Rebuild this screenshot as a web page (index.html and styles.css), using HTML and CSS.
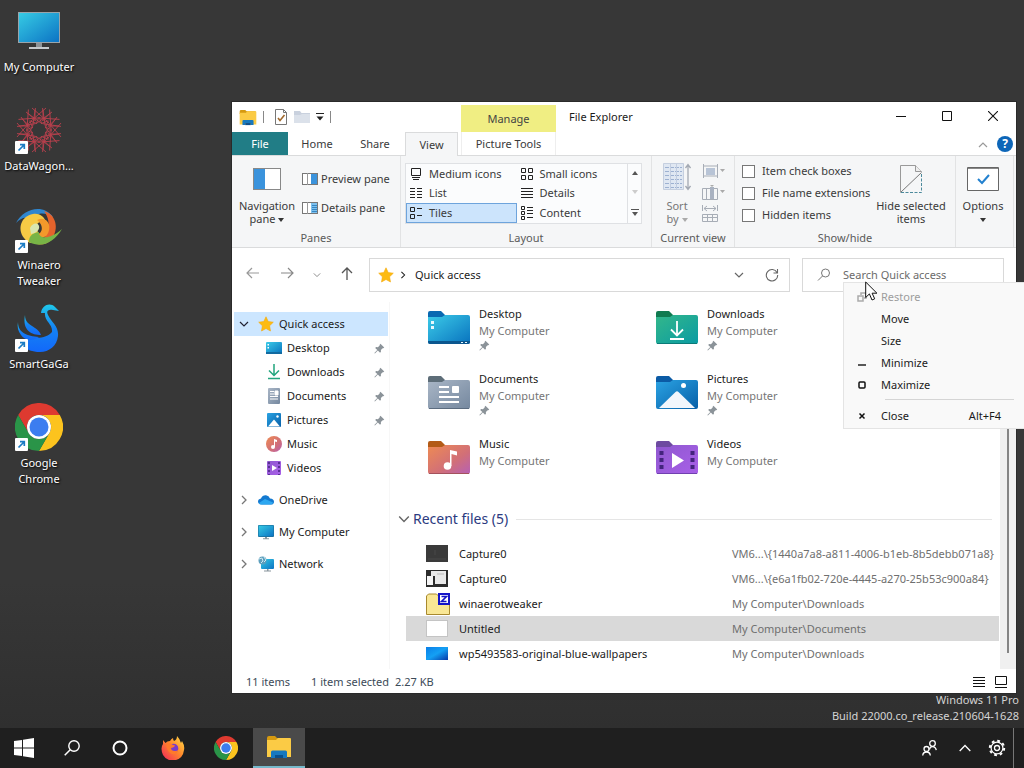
FILE: index.html
```html
<!DOCTYPE html>
<html lang="en">
<head>
    <meta charset="UTF-8">
    <meta name="viewport" content="width=device-width, initial-scale=1.0">
    <title>File Explorer</title>
    <link rel="stylesheet" href="styles.css">
</head>
<body>
    <!-- shared icons -->
    <svg class="defs" aria-hidden="true">
        <defs>
            <linearGradient id="g-screen" x1="0" y1="0" x2="1" y2="1"><stop offset="0" stop-color="#36cbe4"/><stop offset="1" stop-color="#0c73c4"/></linearGradient>
            <linearGradient id="g-desktop" x1="0" y1="0" x2="1" y2="1"><stop offset="0" stop-color="#3ccbe8"/><stop offset="1" stop-color="#0872be"/></linearGradient>
            <linearGradient id="g-downloads" x1="0" y1="0" x2="1" y2="1"><stop offset="0" stop-color="#33b78a"/><stop offset="1" stop-color="#0a9ba3"/></linearGradient>
            <linearGradient id="g-documents" x1="0" y1="0" x2="1" y2="1"><stop offset="0" stop-color="#a9b6c6"/><stop offset="1" stop-color="#75889f"/></linearGradient>
            <linearGradient id="g-pictures" x1="0" y1="0" x2="1" y2="1"><stop offset="0" stop-color="#2ba3e3"/><stop offset="1" stop-color="#065fa8"/></linearGradient>
            <linearGradient id="g-music" x1="0" y1="0" x2="1" y2="1"><stop offset="0" stop-color="#ee8b53"/><stop offset=".6" stop-color="#d16f78"/><stop offset="1" stop-color="#b660b5"/></linearGradient>
            <linearGradient id="g-videos" x1="0" y1="0" x2="1" y2="1"><stop offset="0" stop-color="#8f58cf"/><stop offset="1" stop-color="#a860e8"/></linearGradient>
            <linearGradient id="g-swan" x1="0" y1="0" x2="0" y2="1"><stop offset="0" stop-color="#1fc8ea"/><stop offset=".5" stop-color="#1583f3"/><stop offset="1" stop-color="#1268fa"/></linearGradient>
            <linearGradient id="g-fox" x1="1" y1="0" x2="0" y2="1"><stop offset="0" stop-color="#ffe14a"/><stop offset=".45" stop-color="#ff8a2b"/><stop offset="1" stop-color="#f3215c"/></linearGradient>
            <linearGradient id="g-wall" x1="0" y1="0" x2="1" y2="1"><stop offset="0" stop-color="#0a7fe8"/><stop offset=".5" stop-color="#14a0f4"/><stop offset="1" stop-color="#0838a8"/></linearGradient>
        </defs>
        <symbol id="i-shortcut" viewBox="0 0 13 13"><rect width="13" height="13" rx="1" fill="#fff"/><path d="M3.500 9.500L8.500 4.500M5 3.700h4.300V8" fill="none" stroke="#1c7cc4" stroke-width="1.700"/></symbol>
        <symbol id="i-chrome" viewBox="0 0 48 48">
            <path fill="#de3a30" d="M24 12h20.800A24 24 0 0 0 3.200 12l10.400 18A12 12 0 0 1 24 12z"/>
            <path fill="#fcc31e" d="M44.800 12A24 24 0 0 1 24 48l10.400-18A12 12 0 0 0 24 12z"/>
            <path fill="#2a9448" d="M3.200 12A24 24 0 0 0 24 48l10.400-18a12 12 0 0 1-20.800 0z"/>
            <circle cx="24" cy="24" r="12" fill="#fff"/><circle cx="24" cy="24" r="9.500" fill="#3c7df0"/>
        </symbol>
        <symbol id="i-monitor" viewBox="0 0 16 16"><rect x="0" y="1" width="16" height="12" rx="1" fill="#1b6f9c"/><rect x=".6" y="1.600" width="14.800" height="10.600" fill="url(#g-screen)"/><path d="M7 13h2v1.500H7zM5 14.300h6v1H5z" fill="#8a969e"/></symbol>
        <symbol id="i-pin" viewBox="0 0 12 12"><path fill="#8b9399" d="M7 .8L11.200 5l-1.100.7-.6-.1-2 2 .1 2-1 1L4.200 8.200 1 11.400l-.6-.6L3.600 7.600 1.300 5.400l1-1 2 .1 2-2-.1-.7z"/></symbol>
        <symbol id="i-star" viewBox="0 0 16 16"><path fill="#fdbb12" stroke="#f5a90b" stroke-width=".6" stroke-linejoin="round" d="M8 .8l2.200 4.700 5.100.7-3.700 3.600.9 5.200L8 12.500 3.500 15l.9-5.200L.7 6.200l5.100-.7z"/></symbol>
        <symbol id="i-explorer" viewBox="0 0 26 24"><path d="M1 3q0-2 2-2h6l2 2h13v4H1z" fill="#d69a10"/><path d="M1 5h9l2-2h12q1 0 1 1v18H1z" fill="#fbcb45"/><path d="M5 23v-6q0-1.500 1.500-1.500h13Q21 15.500 21 17v6h-4v-3H9v3z" fill="#1778bf"/><path d="M9 23v-3h8v3z" fill="#0b4f8c"/></symbol>
        <symbol id="i-chev" viewBox="0 0 10 10"><path d="M3 1l4 4-4 4" fill="none" stroke="currentColor" stroke-width="1.300"/></symbol>
        <symbol id="i-chevdown" viewBox="0 0 10 10"><path d="M1 3l4 4 4-4" fill="none" stroke="currentColor" stroke-width="1.200"/></symbol>
    </svg>

    <main class="desktop">
        <div class="desktop-icons">
            <a class="desktop-icon" href="#computer">
                <span class="desktop-pic">
                    <svg width="48" height="48" viewBox="0 0 48 48"><rect x="3" y="5" width="42" height="31" fill="#9aa4aa"/><rect x="4" y="6" width="40" height="29" fill="url(#g-screen)"/><path d="M21 36h6v4h-6z" fill="#8d9397"/><path d="M14 40h20v2H14z" fill="#c6cacd"/></svg>
                </span>
                My Computer
            </a>
            <a class="desktop-icon" href="#datawagon">
                <span class="desktop-pic">
                    <svg width="48" height="48" viewBox="-24 -24 48 48" fill="none" stroke="#b8404d" stroke-width=".9">
                        <g id="spoke"><path d="M-7-22L8-9M7-22L-8-9M-13-18L2-7M13-18L-2-7M-4-20V-9M4-20V-9M-3-6L0-13 3-6"/></g>
                        <use href="#spoke" transform="rotate(45)"/>
                        <use href="#spoke" transform="rotate(90)"/>
                        <use href="#spoke" transform="rotate(135)"/>
                        <use href="#spoke" transform="rotate(180)"/>
                        <use href="#spoke" transform="rotate(225)"/>
                        <use href="#spoke" transform="rotate(270)"/>
                        <use href="#spoke" transform="rotate(315)"/>
                    </svg>
                    <svg class="shortcut"><use href="#i-shortcut"/></svg>
                </span>
                DataWagon...
            </a>
            <a class="desktop-icon" href="#winaero">
                <span class="desktop-pic">
                    <svg width="48" height="48" viewBox="0 0 48 48">
                        <path fill="#2f86cf" d="M1 18C8 4 28-2 38 12c-8-5-17-5-22 3C11 11 6 13 1 18z"/>
                        <path fill="#e4632c" d="M29 6c14 4 15 21 6 30-5 4-9 4-13 3 11-5 16-21 7-33z"/>
                        <path fill="#f6ca45" d="M18 9C6 11 2 24 9 33c2 3 5 5 8 5 0-5 1-8 7-9-5-8-2-14 7-12-2-6-7-9-13-8z"/>
                        <path fill="#f3992b" d="M22 15c10-5 16 6 10 15-4 4-9 3-11-1 6 1 9-8 1-14z"/>
                        <path fill="#78b446" d="M14 37c0-6 3-9 10-10-1 7 11 8 23-3C39 37 27 44 14 37z"/>
                        <path fill="#d9e7b0" d="M15 23c2-5 8-6 9-2s-3 7-8 8z"/>
                    </svg>
                    <svg class="shortcut"><use href="#i-shortcut"/></svg>
                </span>
                Winaero<br>Tweaker
            </a>
            <a class="desktop-icon" href="#smartgaga">
                <span class="desktop-pic">
                    <svg width="48" height="48" viewBox="0 0 48 48" fill="url(#g-swan)">
                        <path d="M26 9c1-8 9-11 14-6l4 4-6-1c-5-1-7 1-5 5 3 7 11 11 10 21-1 10-9 16-18 16-8 0-13-2-17-7l7-8c9 2 18 0 22-5 1-8-8-11-7-19z"/>
                        <path d="M10 11c0 7 4 9 10 13 3 2 5 4 6 7-9 0-19-4-16-20z"/>
                        <path d="M3 18c0 11 9 14 21 15-7 5-15 3-18-2-3-4-4-8-3-13z"/>
                    </svg>
                    <svg class="shortcut"><use href="#i-shortcut"/></svg>
                </span>
                SmartGaGa
            </a>
            <a class="desktop-icon" href="#chrome">
                <span class="desktop-pic">
                    <svg width="48" height="48"><use href="#i-chrome"/></svg>
                    <svg class="shortcut"><use href="#i-shortcut"/></svg>
                </span>
                Google<br>Chrome
            </a>
        </div>

        <p class="watermark">Windows 11 Pro<br>Build 22000.co_release.210604-1628</p>

        <section class="window">
            <header class="titlebar">
                <div class="quick-bar">
                    <svg width="18" height="17"><use href="#i-explorer"/></svg>
                    <span class="bar"></span>
                    <button class="quick-btn check" aria-label="Properties"><svg width="14" height="16" viewBox="0 0 14 16" fill="none"><path d="M1.500.5h8l3 3v12h-11z" stroke="#777" fill="#fff"/><path d="M9.500.5v3h3" stroke="#777"/><path d="M4 9l2 2.500L10.500 6" stroke="#a0682c" stroke-width="1.600"/></svg></button>
                    <button class="quick-btn" aria-label="New folder"><svg width="16" height="14" viewBox="0 0 16 14"><path d="M0 1h6l1.500 2H16v10H0z" fill="#c9d1de"/><path d="M0 5h6l2-1h8v9H0z" fill="#dbe1ea"/></svg></button>
                    <button class="quick-btn" aria-label="Customize"><svg width="8" height="8" viewBox="0 0 8 8"><path d="M0 .5h8" stroke="#222"/><path d="M.5 3.500h7L4 7.500z" fill="#222"/></svg></button>
                    <span class="bar"></span>
                </div>
                <span class="manage">Manage</span>
                <h1 class="title">File Explorer</h1>
                <button class="win-btn" aria-label="Minimize window"><svg width="10" height="10"><path d="M0 5.500h10" stroke="#111"/></svg></button>
                <button class="win-btn" aria-label="Maximize window"><svg width="10" height="10"><path d="M.5.5h9v9h-9z" fill="none" stroke="#111"/></svg></button>
                <button class="win-btn" aria-label="Close window"><svg width="10" height="10"><path d="M0 0l10 10M10 0L0 10" stroke="#111" stroke-width="1.100"/></svg></button>
            </header>

            <nav class="tabs">
                <button class="tab file">File</button>
                <button class="tab">Home</button>
                <button class="tab">Share</button>
                <button class="tab active">View</button>
                <button class="tab tools">Picture Tools</button>
                <button class="tab-icon" aria-label="Collapse ribbon"><svg width="10" height="6" viewBox="0 0 10 6"><path d="M1 5l4-4 4 4" fill="none" stroke="#999" stroke-width="1.200"/></svg></button>
                <button class="help" aria-label="Help">?</button>
            </nav>

            <div class="ribbon">
                <section class="group panes">
                    <div class="group-body">
                        <button class="big-btn">
                            <svg width="28" height="22" viewBox="0 0 28 22"><rect x=".5" y=".5" width="27" height="21" fill="#fff" stroke="#888"/><path d="M1 1h11v20H1z" fill="#3b93dc"/></svg>
                            <span>Navigation<br>pane <i class="caret"></i></span>
                        </button>
                        <div class="pane-list">
                            <button class="small-btn"><svg width="16" height="12" viewBox="0 0 16 12"><rect x=".5" y=".5" width="15" height="11" fill="#fff" stroke="#777"/><path d="M5.500 0v12" stroke="#999"/><path d="M9 1h6v10H9z" fill="#3b93dc"/></svg>Preview pane</button>
                            <button class="small-btn"><svg width="16" height="12" viewBox="0 0 16 12"><rect x=".5" y=".5" width="15" height="11" fill="#fff" stroke="#777"/><path d="M5.500 0v12" stroke="#999"/><path d="M9 1h6v10H9z" fill="#7ec1ee"/><path d="M10 3.500h5M10 5.500h5M10 7.500h5M10 9.500h5" stroke="#2277b8" stroke-width=".8"/></svg>Details pane</button>
                        </div>
                    </div>
                    <h2>Panes</h2>
                </section>

                <section class="group layout">
                    <div class="gallery">
                        <div class="gallery-grid">
                            <button><svg width="14" height="14" viewBox="0 0 14 14" fill="none" stroke="#222"><path d="M2.500 1.500h9v7h-9zM3 10.500h8M4 12.500h6"/></svg>Medium icons</button>
                            <button><svg width="14" height="14" viewBox="0 0 14 14" fill="none" stroke="#222"><path d="M1.500 1.500h4v4h-4zM8.500 1.500h4v4h-4zM1.500 8.500h4v4h-4zM8.500 8.500h4v4h-4z"/></svg>Small icons</button>
                            <button><svg width="14" height="14" viewBox="0 0 14 14" stroke="#222"><path d="M1 2.500h5M8 2.500h5M1 5.500h5M8 5.500h5M1 8.500h5M8 8.500h5M1 11.500h5M8 11.500h5"/></svg>List</button>
                            <button><svg width="14" height="14" viewBox="0 0 14 14" stroke="#222"><path d="M1 2.500h12M1 5.500h12M1 8.500h12M1 11.500h12"/></svg>Details</button>
                            <button class="on"><svg width="14" height="14" viewBox="0 0 14 14" fill="none" stroke="#222"><path d="M1.500 1.500h4v4h-4zM1.500 8.500h4v4h-4zM8 2.500h5M8 9.500h5"/></svg>Tiles</button>
                            <button><svg width="14" height="14" viewBox="0 0 14 14" fill="none" stroke="#222"><path d="M1.500.5h3v3h-3zM1.500 5.500h3v3h-3zM1.500 10.500h3v3h-3zM7 1.500h6M7 4.500h6M7 7.500h6M7 11.500h6"/></svg>Content</button>
                        </div>
                        <div class="gallery-scroll">
                            <button aria-label="Row up"><svg width="6" height="4"><path d="M0 4l3-4 3 4z" fill="#555"/></svg></button>
                            <button aria-label="Row down"><svg width="6" height="4"><path d="M0 0l3 4 3-4z" fill="#ccc"/></svg></button>
                            <button aria-label="More layouts"><svg width="8" height="7"><path d="M0 .5h8" stroke="#555"/><path d="M1 3l3 4 3-4z" fill="#555"/></svg></button>
                        </div>
                    </div>
                    <h2>Layout</h2>
                </section>

                <section class="group current">
                    <div class="group-body">
                        <button class="big-btn" disabled>
                            <svg width="28" height="28" viewBox="0 0 28 28" fill="none"><path d="M.5.5h20v26H.5z" fill="#dfe7f2" stroke="#c5cfdf"/><path d="M2 4.500h17M2 8.500h17M2 12.500h17M2 16.500h17M2 20.500h17M2 24.500h17" stroke="#9db1d1" stroke-dasharray="4 1"/><path d="M7.500 1v25M13.500 1v25" stroke="#c2cde0"/><path d="M25 2v24M22.500 5L25 1.500 27.500 5M22.500 23l2.500 3.500 2.500-3.500" stroke="#a3a9b3" stroke-width="1.300"/></svg>
                            <span>Sort<br>by <i class="caret"></i></span>
                        </button>
                        <div class="view-tools">
                            <button disabled aria-label="Group by"><svg width="24" height="16" viewBox="0 0 24 16" fill="none"><path d="M1.500 1v14M15.500 1v14M1 3h15M1 13h15" stroke="#a7adb6"/><path d="M4 5h9v7H4z" fill="#b8c4d6"/><path d="M18 6h5l-2.500 3z" fill="#aaa"/></svg></button>
                            <button disabled aria-label="Add columns"><svg width="24" height="16" viewBox="0 0 24 16" fill="none"><path d="M.5 4.500h15v11H.5zM4.500 4v12" stroke="#a7adb6"/><path d="M8 3h4v12H8z" fill="#a9b2c1"/><path d="M8 1h4l-2 2zM18 6h5l-2.500 3z" fill="#aaa"/></svg></button>
                            <button disabled aria-label="Size all columns to fit"><svg width="24" height="18" viewBox="0 0 24 18" fill="none" stroke="#a7adb6"><path d="M.5 0v6M15.500 0v6M2 3.500h12M5 1L2 3.500 5 6M11 1l3 2.500L11 6M.5 9.500h15v7H.5zM5.500 9v8M10.500 9v8M0 12.500h16"/></svg></button>
                        </div>
                    </div>
                    <h2>Current view</h2>
                </section>

                <section class="group showhide">
                    <div class="group-body">
                        <div class="checks">
                            <label><input type="checkbox">Item check boxes</label>
                            <label><input type="checkbox">File name extensions</label>
                            <label><input type="checkbox">Hidden items</label>
                        </div>
                        <button class="big-btn hide-btn">
                            <svg width="22" height="28" viewBox="0 0 22 28" fill="none"><path d="M.5 27V.5h15l6 6" stroke="#999"/><path d="M15.500.5v6h6" stroke="#999" fill="#eee"/><path d="M.5 27.500l21-20" stroke="#777"/><path d="M21.500 9v18.500H1" stroke="#4c8a9c" stroke-dasharray="3 1.500"/></svg>
                            <span>Hide selected<br>items</span>
                        </button>
                    </div>
                    <h2>Show/hide</h2>
                </section>

                <section class="group options">
                    <div class="group-body">
                        <button class="big-btn">
                            <svg width="32" height="24" viewBox="0 0 32 24" fill="none"><path d="M.5.500h31v23H.500z" fill="#fff" stroke="#666"/><path d="M1 1.500h30" stroke="#888"/><path d="M11 12l4 4 7-8" stroke="#2381cf" stroke-width="2"/></svg>
                            <span>Options<br><i class="caret"></i></span>
                        </button>
                    </div>
                </section>
            </div>

            <div class="address-row">
                <button class="nav-btn" aria-label="Back"><svg width="14" height="12" viewBox="0 0 14 12"><path d="M13 6H1M6 1L1 6l5 5" fill="none" stroke="#999" stroke-width="1.200"/></svg></button>
                <button class="nav-btn" aria-label="Forward"><svg width="14" height="12" viewBox="0 0 14 12"><path d="M1 6h12M8 1l5 5-5 5" fill="none" stroke="#888" stroke-width="1.200"/></svg></button>
                <button class="nav-btn recent-btn" aria-label="Recent locations"><svg width="8" height="8"><use href="#i-chevdown"/></svg></button>
                <button class="nav-btn" aria-label="Up"><svg width="12" height="13" viewBox="0 0 12 13"><path d="M6 13V1M1 6l5-5 5 5" fill="none" stroke="#555" stroke-width="1.300"/></svg></button>
                <div class="address">
                    <svg width="16" height="16"><use href="#i-star"/></svg>
                    <svg class="crumb" width="8" height="8"><use href="#i-chev"/></svg>
                    <span>Quick access</span>
                    <button class="drop" aria-label="Previous locations"><svg width="10" height="10"><use href="#i-chevdown"/></svg></button>
                    <button aria-label="Refresh"><svg width="14" height="14" viewBox="0 0 14 14"><path d="M12 4.500A5.700 5.700 0 1 0 12.700 7M12.500 1v4h-4" fill="none" stroke="#666" stroke-width="1.100"/></svg></button>
                </div>
                <label class="search">
                    <svg width="14" height="14" viewBox="0 0 14 14"><circle cx="8.500" cy="5" r="4" fill="none" stroke="#777"/><path d="M5.500 8L1 12.500" stroke="#777"/></svg>
                    <input type="text" aria-label="Search" placeholder="Search Quick access">
                </label>
            </div>

            <div class="body">
                <nav class="sidebar">
                    <a class="node root selected" href="#quick"><svg class="arrow" width="10" height="10"><use href="#i-chevdown"/></svg><svg width="16" height="16"><use href="#i-star"/></svg>Quick access</a>
                    <a class="node" href="#desktop"><svg width="16" height="16" viewBox="0 0 16 16"><rect y="2" width="16" height="12" rx="1" fill="url(#g-desktop)"/><path d="M1.500 4h1.500v1.500H1.500zM1.500 7h1.500v1.500H1.500z" fill="#fff"/><path d="M0 12h16v2H0z" fill="#126aa0"/></svg>Desktop<svg class="pin"><use href="#i-pin"/></svg></a>
                    <a class="node" href="#downloads"><svg width="16" height="16" viewBox="0 0 16 16"><path d="M8 0v11M3 6.500l5 5 5-5M2 14.500h12" fill="none" stroke="#22a57e" stroke-width="1.500"/></svg>Downloads<svg class="pin"><use href="#i-pin"/></svg></a>
                    <a class="node" href="#documents"><svg width="16" height="16" viewBox="0 0 16 16"><rect x="2" width="12" height="16" rx="1" fill="url(#g-documents)"/><path d="M4 3.500h4M4 6h4M4 8.500h8M4 11h8M9 3h3v4H9z" stroke="#fff" fill="#fff"/></svg>Documents<svg class="pin"><use href="#i-pin"/></svg></a>
                    <a class="node" href="#pictures"><svg width="16" height="16" viewBox="0 0 16 16"><rect x="1" y="1" width="14" height="14" rx="1" fill="url(#g-pictures)"/><path d="M2 14.500l6-7 6 7z" fill="#fff"/><circle cx="11.500" cy="4.500" r="1.200" fill="#fff"/></svg>Pictures<svg class="pin"><use href="#i-pin"/></svg></a>
                    <a class="node" href="#music"><svg width="16" height="16" viewBox="0 0 16 16"><circle cx="8" cy="8" r="8" fill="url(#g-music)"/><path d="M8 3l3 1v2L9 5.500V11" fill="#fff"/><path d="M8.500 3.500V11" stroke="#fff"/><circle cx="7" cy="11" r="2" fill="#fff"/></svg>Music</a>
                    <a class="node" href="#videos"><svg width="16" height="16" viewBox="0 0 16 16"><rect x="1" y="1" width="14" height="14" rx="1" fill="url(#g-videos)"/><path d="M3 2v13M13 2v13" stroke="#43237d" stroke-width="1.500" stroke-dasharray="2 2"/><path d="M6 5l5 3-5 3z" fill="#fff"/></svg>Videos</a>
                    <div class="roots">
                        <a class="node root" href="#onedrive"><svg class="arrow" width="10" height="10"><use href="#i-chev"/></svg><svg width="16" height="16" viewBox="0 0 16 16"><path d="M4 12.500Q0 12.500 0 9.500 0 7 3 6.500 4.500 3 8 3.300q3 .3 4 3.200 4 .3 4 3.200 0 2.800-3 2.800z" fill="#1379d0"/><path d="M4 12.500Q1 12.500 1 11l6-4 8 3.500q0 2-2.500 2z" fill="#2da7f0"/></svg>OneDrive</a>
                        <a class="node root" href="#pc"><svg class="arrow" width="10" height="10"><use href="#i-chev"/></svg><svg width="16" height="16"><use href="#i-monitor"/></svg>My Computer</a>
                        <a class="node root" href="#network"><svg class="arrow" width="10" height="10"><use href="#i-chev"/></svg><svg width="16" height="16" viewBox="0 0 16 16"><rect x="3" y="3" width="13" height="10" rx="1" fill="url(#g-screen)"/><circle cx="4.500" cy="4.500" r="4" fill="#5d9fbd"/><path d="M1 3l3-1 1 3-2 2M6 1l2 3-2 2" stroke="#cfe9f2" fill="none"/><path d="M9 13h1.500v1.500H13v1H6v-1h3z" fill="#8a969e"/></svg>Network</a>
                    </div>
                </nav>

                <div class="content">
                    <div class="tiles">
                        <a class="tile" href="#desktop">
                            <svg width="42" height="34" viewBox="0 0 42 34"><path d="M0 2q0-2 2-2h11l4 4v4H0z" fill="#0968b1"/><path d="M0 6h14l3-2h23q2 0 2 2v25q0 2-2 2H2q-2 0-2-2z" fill="url(#g-desktop)"/><path d="M0 30h42v1q0 2-2 2H2q-2 0-2-2z" fill="#0b568e"/><path d="M3 10h3v3H3zM3 15h3v3H3zM33 31h2v1h-2zM37 31h2v1h-2z" fill="#e8f8fd"/></svg>
                            <span>Desktop<small>My Computer</small><svg class="pin"><use href="#i-pin"/></svg></span>
                        </a>
                        <a class="tile" href="#downloads">
                            <svg width="42" height="34" viewBox="0 0 42 34"><path d="M0 2q0-2 2-2h11l4 4v4H0z" fill="#107a50"/><path d="M0 6h14l3-2h23q2 0 2 2v25q0 2-2 2H2q-2 0-2-2z" fill="url(#g-downloads)"/><path d="M1 32.500h40" stroke="#0b7b78"/><path d="M21 10v14M15 18.500l6 6 6-6M14 28h14" fill="none" stroke="#fff" stroke-width="1.800"/></svg>
                            <span>Downloads<small>My Computer</small><svg class="pin"><use href="#i-pin"/></svg></span>
                        </a>
                        <a class="tile" href="#documents">
                            <svg width="42" height="34" viewBox="0 0 42 34"><path d="M0 2q0-2 2-2h11l4 4v4H0z" fill="#5d6d78"/><path d="M0 6h14l3-2h23q2 0 2 2v25q0 2-2 2H2q-2 0-2-2z" fill="url(#g-documents)"/><path d="M1 32.500h40" stroke="#5b6c80"/><path d="M11 11h10M11 16h10M11 21h20M11 26h20" stroke="#fff" stroke-width="2"/><rect x="24" y="10" width="7" height="7" rx="1" fill="#fff"/></svg>
                            <span>Documents<small>My Computer</small><svg class="pin"><use href="#i-pin"/></svg></span>
                        </a>
                        <a class="tile" href="#pictures">
                            <svg width="42" height="34" viewBox="0 0 42 34"><path d="M0 2q0-2 2-2h11l4 4v4H0z" fill="#0b5ba5"/><path d="M0 6h14l3-2h23q2 0 2 2v25q0 2-2 2H2q-2 0-2-2z" fill="url(#g-pictures)"/><path d="M3 32l16.500-16q1.500-1.500 3 0L39 32z" fill="#f1f6fc"/><circle cx="27.500" cy="9.500" r="2.500" fill="#fff"/></svg>
                            <span>Pictures<small>My Computer</small><svg class="pin"><use href="#i-pin"/></svg></span>
                        </a>
                        <a class="tile" href="#music">
                            <svg width="42" height="34" viewBox="0 0 42 34"><path d="M0 2q0-2 2-2h11l4 4v4H0z" fill="#b35b17"/><path d="M0 6h14l3-2h23q2 0 2 2v25q0 2-2 2H2q-2 0-2-2z" fill="url(#g-music)"/><path d="M1 32.500h40" stroke="#a4525c"/><circle cx="19.500" cy="25" r="3.800" fill="#fff"/><path d="M22 9l7 1.500v4L23.500 13v12H22z" fill="#fff"/></svg>
                            <span>Music<small>My Computer</small></span>
                        </a>
                        <a class="tile" href="#videos">
                            <svg width="42" height="34" viewBox="0 0 42 34"><path d="M0 2q0-2 2-2h11l4 4v4H0z" fill="#6d4aa0"/><path d="M0 6h14l3-2h23q2 0 2 2v25q0 2-2 2H2q-2 0-2-2z" fill="url(#g-videos)"/><path d="M1 32.500h40" stroke="#7040b0"/><path d="M5.500 10v20M36.500 10v20" stroke="#43237d" stroke-width="4" stroke-dasharray="4 3"/><path d="M16 12l12 7.500L16 27z" fill="#fff"/></svg>
                            <span>Videos<small>My Computer</small></span>
                        </a>
                    </div>

                    <h2 class="recent-title"><svg width="12" height="12"><use href="#i-chevdown"/></svg>Recent files (5)</h2>

                    <table class="files">
                        <tr>
                            <td class="thumb"><svg width="22" height="17"><rect width="22" height="17" fill="#3a3a3a"/><path d="M2 14h18M9 5v5" stroke="#484848"/></svg></td>
                            <td class="name">Capture0</td>
                            <td class="path">VM6...\{1440a7a8-a811-4006-b1eb-8b5debb071a8}</td>
                        </tr>
                        <tr>
                            <td class="thumb"><svg width="22" height="17"><rect width="22" height="17" fill="#2c2c2c"/><path d="M5 1h15v13H9V6H5z" fill="#e9e9e9"/><path d="M1 6h6v9H1z" fill="#f5f5f5"/><path d="M11 4h7" stroke="#bbb"/></svg></td>
                            <td class="name">Capture0</td>
                            <td class="path">VM6...\{e6a1fb02-720e-4445-a270-25b53c900a84}</td>
                        </tr>
                        <tr>
                            <td class="thumb"><svg width="24" height="22" viewBox="0 0 24 22"><path d="M.500 21.500V3l2-2h8l2 2h11v18.500z" fill="#f9e795" stroke="#a8892e"/><rect x="13" y="1" width="10" height="10" fill="#fff" stroke="#1515c8" stroke-width="2"/><path d="M15.500 3.500h5l-5 5h5" fill="none" stroke="#1515c8" stroke-width="1.600"/></svg></td>
                            <td class="name">winaerotweaker</td>
                            <td class="path">My Computer\Downloads</td>
                        </tr>
                        <tr class="selected">
                            <td class="thumb"><svg width="22" height="17"><rect x=".5" y=".5" width="21" height="16" fill="#fff" stroke="#c4c4c4"/></svg></td>
                            <td class="name">Untitled</td>
                            <td class="path">My Computer\Documents</td>
                        </tr>
                        <tr>
                            <td class="thumb"><svg width="22" height="13"><rect width="22" height="13" fill="url(#g-wall)"/></svg></td>
                            <td class="name">wp5493583-original-blue-wallpapers</td>
                            <td class="path">My Computer\Downloads</td>
                        </tr>
                    </table>
                </div>
                <div class="scrollbar"><span></span></div>
            </div>

            <footer class="status">
                <span>11 items</span>
                <span class="picked">1 item selected</span>
                <span>2.27 KB</span>
                <button class="mode" aria-label="Details view"><svg width="12" height="12"><path d="M0 1.500h12M0 4.500h12M0 7.500h12M0 10.500h12" stroke="#111"/></svg></button>
                <button aria-label="Large icons view"><svg width="12" height="12"><path d="M.5.5h11v8H.5zM0 11.500h12" fill="none" stroke="#111"/></svg></button>
            </footer>
        </section>

        <div class="menu" role="menu">
            <button role="menuitem" disabled><svg width="10" height="10" viewBox="0 0 10 10" fill="none" stroke="#aaa" stroke-width="1.500"><path d="M1 4h5v5H1zM4 3V1h5v5H7"/></svg>Restore</button>
            <button role="menuitem"><i></i>Move</button>
            <button role="menuitem"><i></i>Size</button>
            <button role="menuitem"><svg width="10" height="10"><path d="M1 7h8" stroke="#222" stroke-width="1.500"/></svg>Minimize</button>
            <button role="menuitem"><svg width="10" height="10"><rect x="2" y="2" width="6" height="6" rx="1" fill="none" stroke="#111" stroke-width="1.500"/></svg>Maximize</button>
            <hr>
            <button role="menuitem"><svg width="10" height="10"><path d="M2.500 2.500l5 5M7.500 2.500l-5 5" stroke="#111" stroke-width="1.500"/></svg>Close<kbd>Alt+F4</kbd></button>
        </div>

        <svg class="cursor" width="13" height="20" viewBox="0 0 13 20"><path d="M.7 1v15.500l3.700-3.600L7 19l2.700-1.200-2.600-5.600h4.800z" fill="#fff" stroke="#111"/></svg>
    </main>

    <footer class="taskbar">
        <button aria-label="Start"><svg width="20" height="20" viewBox="0 0 20 20"><path d="M0 3l8-1.100v7.600H0zM9 1.800L20 0v9.500H9zM0 10.500h8v7.600L0 17zM9 10.500h11V20L9 18.300z" fill="#fff"/></svg></button>
        <button aria-label="Search"><svg width="16" height="16" viewBox="0 0 16 16"><circle cx="10" cy="6" r="5.200" fill="none" stroke="#fff" stroke-width="1.400"/><path d="M6.200 9.800L.7 15.300" stroke="#fff" stroke-width="1.500"/></svg></button>
        <button aria-label="Cortana"><svg width="16" height="16"><circle cx="8" cy="8" r="6.500" fill="none" stroke="#fff" stroke-width="2"/></svg></button>
        <button class="app first" aria-label="Firefox"><svg width="24" height="24" viewBox="0 0 24 24"><path d="M2 4l2.500 3Q6 5 9 5q1-2 3-3 0 2 1 3 3-1 3-5 3 3 4 7l1-2q3 5 2 9-1 8-8 10-9 2-13-5Q-1 12 2 8z" fill="url(#g-fox)"/><circle cx="12.500" cy="12.500" r="4.800" fill="#7a3bc8"/><path d="M5 8q4-2 7 1 2 0 2 1-2 2-4 2 0 3 4 3 2 0 3-1-1 5-6 4-5-2-6-10z" fill="#ff7a2b"/></svg></button>
        <button class="app" aria-label="Chrome"><svg width="24" height="24"><use href="#i-chrome"/></svg></button>
        <button class="app open" aria-label="File Explorer"><svg width="26" height="24"><use href="#i-explorer"/></svg></button>
        <div class="tray">
            <button aria-label="People"><svg width="15" height="16" viewBox="0 0 15 16" fill="none" stroke="#fff" stroke-width="1.300"><circle cx="10.500" cy="3.500" r="2.800"/><path d="M7.500 9.500q.5-2.800 3-2.800 3 0 3.800 3.500"/><circle cx="4.500" cy="9" r="2.500"/><path d="M.700 15.500Q1 12 4.500 12t3.800 3.500"/></svg></button>
            <button class="more" aria-label="Show hidden icons"><svg width="12" height="8" viewBox="0 0 12 8"><path d="M.700 7L6 1.500 11.300 7" fill="none" stroke="#fff" stroke-width="1.300"/></svg></button>
            <button class="gear" aria-label="Settings"><svg width="18" height="18" viewBox="-9 -9 18 18" fill="none" stroke="#fff"><circle r="7.200" stroke-width="2" stroke-dasharray="2.800 2.855"/><circle r="5.900" stroke-width="1.200"/><circle r="2.500" stroke-width="1.300"/></svg></button>
        </div>
    </footer>
</body>
</html>
```
FILE: styles.css
```css
* {
    box-sizing: border-box;
}

body {
    margin: 0;
    height: 100vh;
    display: flex;
    flex-direction: column;
    overflow: hidden;
    font-family: "Noto Sans", "Open Sans", sans-serif;
    font-size: 11px;
    line-height: 16px;
    color: #1b1b1b;
    background-color: #363636;
}

button, input {
    font: inherit;
    color: inherit;
    border: 0;
    padding: 0;
    background: none;
}

a {
    color: inherit;
    text-decoration: none;
}

h1, h2, p {
    margin: 0;
    font-size: 11px;
    font-weight: normal;
}

svg {
    flex-shrink: 0;
}

.defs {
    position: absolute;
    width: 0;
    height: 0;
}

.desktop {
    flex: 1;
    position: relative;
    min-height: 0;
    background: linear-gradient(#373737 80%, #2f2f2f);
}

/* desktop icons */
.desktop-icons {
    display: grid;
    grid-auto-rows: 99px;
    width: 78px;
    padding-top: 7px;
}

.desktop-icon {
    text-align: center;
    color: white;
    text-shadow: 1px 1px 2px black;
}

.desktop-pic {
    display: block;
    position: relative;
    width: 48px;
    height: 48px;
    margin: 0 auto 4px;
}

.shortcut {
    position: absolute;
    left: 0;
    bottom: 0;
    width: 13px;
    height: 13px;
}

.watermark {
    position: absolute;
    right: 5px;
    bottom: 4px;
    text-align: right;
    color: #d4d4d4;
}

/* explorer window */
.window {
    position: absolute;
    left: 232px;
    top: 102px;
    right: 8px;
    bottom: 35px;
    display: flex;
    flex-direction: column;
    background: white;
    box-shadow: 0 0 0 1px #2a2a2a;
}

.titlebar {
    display: flex;
    height: 30px;
}

.quick-bar {
    display: flex;
    align-items: center;
    gap: 6px;
    width: 229px;
    padding-left: 7px;
}

.quick-btn {
    display: flex;
}

.quick-btn.check {
    margin-left: 4px;
}

.bar {
    width: 1px;
    height: 12px;
    background: #888;
}

.manage {
    width: 95px;
    margin-top: 3px;
    background: #f0ee83;
    line-height: 28px;
    text-align: center;
    color: #444;
}

.title {
    flex: 1;
    padding-left: 13px;
    line-height: 30px;
}

.win-btn {
    width: 46px;
}

.tabs {
    display: flex;
    align-items: stretch;
    height: 23px;
    color: #3a3a3a;
}

.tab {
    width: 58px;
    padding-top: 1px;
}

.tab.file {
    width: 56px;
    background: #217d86;
    color: white;
}

.tab.active {
    width: 53px;
    margin: 0 3px -1px 1px;
    padding-top: 0;
    z-index: 1;
    border: 1px solid #dadbdc;
    border-bottom: 0;
    background: #f5f6f7;
}

.tab.tools {
    width: 95px;
    border: 1px solid #eee;
    border-width: 0 1px;
}

.tab-icon {
    margin-left: auto;
    width: 24px;
}

.help {
    align-self: center;
    width: 16px;
    height: 16px;
    margin: 0 3px 0 2px;
    border-radius: 50%;
    background: #0d66b8;
    color: white;
    font-size: 12px;
    font-weight: bold;
}

/* ribbon */
.ribbon {
    display: flex;
    height: 93px;
    border: 1px solid #dadbdc;
    border-width: 1px 0;
    background: #f5f6f7;
    color: #3a3a3a;
}

.group {
    display: flex;
    flex-direction: column;
    justify-content: space-between;
    padding: 7px 0 1px;
    border-right: 1px solid #e2e3e4;
}

.group h2 {
    text-align: center;
    color: #5a5a5a;
}

.group-body {
    display: flex;
}

.panes {
    width: 169px;
}

.layout {
    width: 251px;
}

.current {
    width: 83px;
}

.showhide {
    width: 221px;
}

.options {
    width: 58px;
}

.big-btn {
    display: flex;
    flex-direction: column;
    align-items: center;
    justify-content: space-between;
    height: 62px;
    line-height: 13px;
}

.panes .big-btn {
    width: 70px;
    padding-top: 5px;
}

.caret {
    display: inline-block;
    border: 3px solid transparent;
    border-top: 4px solid #333;
    border-bottom: 0;
    vertical-align: middle;
}

.pane-list {
    display: flex;
    flex-direction: column;
    gap: 13px;
    padding-top: 8px;
}

.small-btn {
    display: flex;
    align-items: center;
    gap: 3px;
    white-space: nowrap;
}

.gallery {
    display: flex;
    margin: 0 9px 0 4px;
    height: 61px;
    border: 1px solid #dfe1e4;
    background: #fbfcfd;
}

.gallery-grid {
    display: grid;
    grid-template-columns: 1fr 1fr;
    flex: 1;
}

.gallery-grid button {
    display: flex;
    align-items: center;
    gap: 6px;
    padding-left: 3px;
}

.gallery-grid .on {
    background: #cce4fc;
    outline: 1px solid #6ea4dc;
    outline-offset: -1px;
}

.gallery-scroll {
    display: grid;
    width: 14px;
    border-left: 1px solid #dfe1e4;
}

.gallery-scroll button {
    display: grid;
    place-items: center;
}

.current .big-btn {
    width: 50px;
    color: #777;
}

.current .caret {
    border-top-color: #aaa;
}

.view-tools {
    display: flex;
    flex-direction: column;
    gap: 5px;
}

.view-tools button {
    display: flex;
}

.checks {
    display: flex;
    flex-direction: column;
    gap: 6px;
    padding-left: 7px;
    width: 138px;
    white-space: nowrap;
}

.checks label {
    display: flex;
    align-items: center;
    gap: 7px;
}

.checks input {
    appearance: none;
    flex-shrink: 0;
    width: 13px;
    height: 13px;
    margin: 0;
    border: 1px solid #777;
    background: white;
}

.hide-btn {
    width: 76px;
    white-space: nowrap;
    padding-top: 2px;
}

.options .big-btn {
    width: 54px;
    padding-top: 4px;
}

/* address row */
.address-row {
    display: flex;
    align-items: center;
    height: 54px;
    padding: 0 12px 0 4px;
}

.nav-btn {
    width: 34px;
    height: 30px;
}

.recent-btn {
    width: 26px;
    color: #888;
}

.address {
    flex: 1;
    display: flex;
    align-items: center;
    height: 34px;
    margin: 0 12px 0 5px;
    padding: 0 10px 0 8px;
    border: 1px solid #d9d9d9;
}

.crumb {
    margin: 0 8px 0 5px;
}

.drop {
    margin-left: auto;
    margin-right: 21px;
}

.address button {
    display: flex;
    color: #666;
}

.search {
    display: flex;
    align-items: center;
    gap: 12px;
    width: 202px;
    height: 34px;
    padding-left: 14px;
    border: 1px solid #d9d9d9;
}

.search input {
    flex: 1;
    min-width: 0;
    outline: 0;
}

.search input::placeholder {
    color: #6b6b6b;
}

/* sidebar + files */
.body {
    flex: 1;
    display: flex;
    min-height: 0;
}

.sidebar {
    width: 158px;
    padding: 10px 1px 0 2px;
    border-right: 1px solid #f7f7f7;
}

.node {
    display: flex;
    align-items: center;
    gap: 5px;
    height: 24px;
    padding-left: 32px;
}

.node.root {
    padding-left: 5px;
}

.roots {
    display: grid;
    gap: 8px;
    margin-top: 8px;
}

.node .arrow {
    margin-right: 4px;
    color: #777;
}

.node.selected {
    background: #cce6ff;
}

.node.selected .arrow {
    color: #223;
}

.pin {
    width: 11px;
    height: 11px;
}

.node .pin {
    margin-left: auto;
    margin-right: 3px;
}

.content {
    flex: 1;
    min-width: 0;
    padding: 3px 1px 0 8px;
}

.tiles {
    display: grid;
    grid-template-columns: 228px 228px;
    grid-auto-rows: 65px;
    padding-left: 30px;
}

.tile {
    display: flex;
    gap: 9px;
    line-height: 17px;
}

.tile > svg {
    margin-top: 6px;
}

.tile small {
    display: block;
    font-size: 11px;
    color: #767676;
}

.tile .pin {
    display: block;
    margin-top: 1px;
}

.recent-title {
    display: flex;
    align-items: center;
    gap: 3px;
    height: 38px;
    margin-right: 7px;
    font-size: 14px;
    color: #2b3a80;
}

.recent-title::after {
    content: "";
    flex: 1;
    margin-left: 5px;
    border-top: 1px solid #e5e5e5;
}

.recent-title svg {
    color: #666;
}

.files {
    width: calc(100% - 8px);
    margin: 3px 0 0 8px;
    border-collapse: collapse;
    table-layout: fixed;
}

.files tr {
    height: 25px;
}

.files td {
    padding: 0;
    white-space: nowrap;
}

.files .selected {
    background: #d9d9d9;
}

.files .thumb {
    width: 53px;
    padding-left: 20px;
}

.files .thumb svg {
    display: block;
}

.files .name {
    width: 273px;
}

.files .path {
    color: #6f6f6f;
}

.scrollbar {
    display: flex;
    justify-content: center;
    width: 16px;
    padding-bottom: 16px;
    background: #f0f0f0;
}

.scrollbar span {
    width: 2px;
    background: #858585;
}

.status {
    display: flex;
    align-items: center;
    height: 24px;
    padding: 1px 9px 0 14px;
    color: #3c4a58;
}

.status .picked {
    margin: 0 6px 0 21px;
}

.status button {
    display: flex;
}

.status .mode {
    margin-left: auto;
    margin-right: 10px;
}

/* window menu */
.menu {
    position: absolute;
    left: 843px;
    top: 282px;
    width: 184px;
    padding: 3px 1px 1px;
    background: #f9f9f9;
    border: 1px solid #e4e4e4;
}

.menu button {
    display: flex;
    align-items: center;
    width: 100%;
    height: 22px;
    padding: 0 24px 0 12px;
    gap: 14px;
}

.menu i {
    width: 10px;
}

.menu button:disabled {
    color: #9d9d9d;
}

.menu hr {
    margin: 3px 11px 5px 40px;
    border: 0;
    border-top: 1px solid #d5d5d5;
}

.menu kbd {
    margin-left: auto;
    font: inherit;
}

.cursor {
    position: absolute;
    left: 865px;
    top: 281px;
}

/* taskbar */
.taskbar {
    display: flex;
    height: 40px;
    background: #1f1f1f;
}

.taskbar button {
    display: grid;
    place-items: center;
    width: 48px;
}

.taskbar .app {
    width: 52px;
    margin-right: 1px;
}

.taskbar .first {
    margin-left: 3px;
}

.taskbar .open {
    background: #4a4a4a;
    border-bottom: 2px solid #76b9cb;
}

.tray {
    display: flex;
    margin-left: auto;
    margin-right: 10px;
    border-right: 1px solid #777;
}

.taskbar .tray button {
    width: 32px;
}

.taskbar .tray .more {
    width: 40px;
}

.taskbar .tray .gear {
    width: 32px;
    margin-left: -4px;
}
```
